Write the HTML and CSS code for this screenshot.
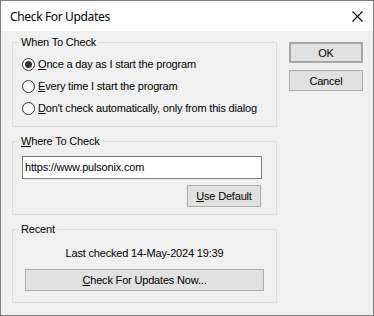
FILE: index.html
```html
<!DOCTYPE html>
<html lang="en">
<head>
  <meta charset="UTF-8" />
  <title>Check For Updates</title>
  <link rel="stylesheet" href="styles.css">
</head>
<body>
  <div class="window">
    <div class="titlebar">
      <span class="title">Check For Updates</span>
      <span class="close">
        <svg width="11" height="11" viewBox="0 0 11 11">
          <path d="M0.5 0.5 L10.5 10.5 M10.5 0.5 L0.5 10.5" stroke="#000" stroke-width="1.1" fill="none" />
        </svg>
      </span>
    </div>

    <div class="client">
      <div class="left">
        <div class="group when">
          <div class="legend">When To Check</div>
          <label class="radio-row">
            <span class="radio checked"></span>
            <span><u>O</u>nce a day as I start the program</span>
          </label>
          <label class="radio-row">
            <span class="radio"></span>
            <span><u>E</u>very time I start the program</span>
          </label>
          <label class="radio-row">
            <span class="radio"></span>
            <span><u>D</u>on't check automatically, only from this dialog</span>
          </label>
        </div>

        <div class="group where">
          <div class="legend"><u>W</u>here To Check</div>
          <div class="textbox">https://www.pulsonix.com</div>
          <div class="row-end">
            <div class="btn default-btn"><u>U</u>se Default</div>
          </div>
        </div>

        <div class="group recent">
          <div class="legend">Recent</div>
          <div class="last">Last checked 14-May-2024 19:39</div>
          <div class="btn wide"><u>C</u>heck For Updates Now...</div>
        </div>
      </div>

      <div class="right">
        <div class="btn ok">OK</div>
        <div class="btn">Cancel</div>
      </div>
    </div>
  </div>
</body>
</html>
```

FILE: styles.css
```css
* {
  box-sizing: border-box;
}

body {
  margin: 0;
  font-family: 'Liberation Sans', Arial, sans-serif;
  font-size: 11px;
  letter-spacing: -0.18px;
  color: #000;
  background: #fff;
}

.window {
  width: 374px;
  height: 316px;
  border: 1px solid #7f7f7f;
  background: #f0f0f0;
  display: flex;
  flex-direction: column;
}

.titlebar {
  height: 30px;
  background: #fff;
  display: flex;
  align-items: center;
  justify-content: space-between;
  padding: 0 10px 0 9px;
}

.title {
  font-family: 'Noto Sans', 'Open Sans', sans-serif;
  font-size: 12px;
  letter-spacing: -0.35px;
}

.close {
  display: flex;
}

.client {
  display: flex;
  gap: 12px;
  padding: 11px 10px 0 11px;
}

.left {
  width: 265px;
  display: flex;
  flex-direction: column;
  gap: 14px;
}

.group {
  position: relative;
  border: 1px solid #dcdcdc;
}

.legend {
  position: absolute;
  top: -7px;
  left: 6px;
  padding: 0 2px;
  line-height: 13px;
  background: #f0f0f0;
}

.when {
  height: 85px;
  padding: 10px 0 0 9px;
}

.radio-row {
  display: flex;
  align-items: center;
  height: 22px;
  gap: 3px;
}

.radio {
  width: 13px;
  height: 13px;
  border: 1px solid #333;
  border-radius: 50%;
  background: #fff;
  display: flex;
  align-items: center;
  justify-content: center;
}

.radio.checked::after {
  content: '';
  width: 7px;
  height: 7px;
  border-radius: 50%;
  background: #333;
}

.where {
  height: 74px;
  padding: 14px 14px 0 9px;
}

.textbox {
  height: 23px;
  border: 1px solid #7a7a7a;
  background: #fff;
  padding: 0 2px;
  line-height: 21px;
}

.row-end {
  display: flex;
  justify-content: flex-end;
  margin-top: 6px;
  padding-right: 1px;
}

.btn {
  height: 21px;
  border: 1px solid #adadad;
  background: #e1e1e1;
  display: flex;
  align-items: center;
  justify-content: center;
}

.default-btn {
  width: 74px;
  height: 22px;
}

.recent {
  height: 74px;
  padding: 16px 12px 0 12px;
}

.last {
  text-align: center;
  line-height: 14px;
}

.wide {
  height: 22px;
  margin-top: 9px;
}

.right {
  width: 74px;
  display: flex;
  flex-direction: column;
  gap: 7px;
}

.ok {
  border: 2px solid #a6a6a6;
}
```
